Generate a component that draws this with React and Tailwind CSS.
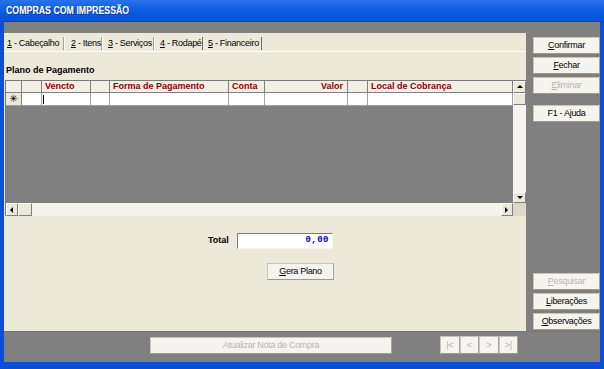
import React from "react";

const FONT = "font-['Liberation_Sans',Arial,sans-serif]";

function Btn({ children, disabled, className = "" }) {
  return (
    <div
      className={`flex items-center justify-center border border-[#c9c6b6] border-b-[#9e9b8c] border-r-[#a9a697] bg-[#f5f4ee] text-[9px] tracking-[-0.3px] leading-none whitespace-nowrap ${
        disabled ? "text-[#b9b6a8]" : "text-black"
      } ${className}`}
    >
      {children}
    </div>
  );
}

function U({ children }) {
  return <span className="underline underline-offset-[1px]">{children}</span>;
}

function Arrow({ dir }) {
  const pts = {
    up: "1,5 4,2 7,5",
    down: "1,2 4,5 7,2",
    left: "5,1 2,4 5,7",
    right: "2,1 5,4 2,7",
  }[dir];
  return (
    <svg width="8" height="8" viewBox="0 0 8 8">
      <polygon points={pts} fill="#000" />
    </svg>
  );
}

function SBtn({ dir, className = "" }) {
  return (
    <div
      className={`flex items-center justify-center bg-[#ece9d8] border border-t-white border-l-white border-b-[#808080] border-r-[#808080] ${className}`}
    >
      <Arrow dir={dir} />
    </div>
  );
}

const cols = [
  { w: "w-[16px]", label: "" },
  { w: "w-[20px]", label: "" },
  { w: "w-[49px]", label: "Vencto" },
  { w: "w-[19px]", label: "" },
  { w: "w-[119px]", label: "Forma de Pagamento" },
  { w: "w-[36px]", label: "Conta" },
  { w: "w-[83px]", label: "Valor", right: true },
  { w: "w-[20px]", label: "" },
  { w: "w-[145px]", label: "Local de Cobrança" },
];

export default function App() {
  return (
    <div className={`w-[604px] h-[369px] flex flex-col bg-[#0c4fd6] ${FONT} overflow-hidden`}>
      {/* Title bar */}
      <div className="h-[22px] flex items-center pl-[6px] bg-gradient-to-b from-[#2a72ec] via-[#0a5be4] to-[#0752d8] border-b border-[#0846c4]">
        <span className="inline-block origin-left scale-x-80 text-white font-bold text-[11px] whitespace-nowrap [text-shadow:1px_1px_0_#0a3a9a]">
          COMPRAS COM IMPRESSÃO
        </span>
      </div>

      {/* Body */}
      <div className="flex-1 flex flex-col mx-[4px] mb-[7px] bg-[#808080]">
        <div className="flex flex-1">
          {/* Left panel */}
          <div className="w-[522px] mt-[11px] bg-[#ece9d8] flex flex-col">
            {/* Tab strip */}
            <div className="h-[19px] pt-[4px] pb-[1px] border-b border-white flex text-[9px] tracking-[-0.3px] text-black whitespace-nowrap">
              <div className="w-[60px] h-[13px] pl-[3px] flex items-center border-r border-[#a7a494]">
                <U>1</U>&nbsp;- Cabeçalho
              </div>
              <div className="w-[38px] h-[13px] pl-[6px] flex items-center border-l border-white border-r border-r-[#a7a494]">
                <U>2</U>&nbsp;- Itens
              </div>
              <div className="w-[52px] h-[13px] pl-[5px] flex items-center border-l border-white border-r border-r-[#a7a494]">
                <U>3</U>&nbsp;- Serviços
              </div>
              <div className="w-[49px] h-[13px] pl-[5px] flex items-center border-l border-white border-r border-r-[#6f6d64]">
                <U>4</U>&nbsp;- Rodapé
              </div>
              <div className="w-[59px] h-[13px] pl-[5px] flex items-center border-r border-[#6f6d64]">
                <U>5</U>&nbsp;- Financeiro
              </div>
            </div>

            <div className="mt-[12px] h-[12px] leading-[12px] pl-[2px] text-[9px] font-bold text-black">
              Plano de Pagamento
            </div>

            {/* Grid */}
            <div className="mt-[4px] ml-[1px] w-[521px] flex flex-col border-t border-l border-[#7a7a7a]">
              <div className="flex h-[122px]">
                <div className="w-[507px] flex flex-col">
                  {/* header */}
                  <div className="flex h-[12px] bg-[#f1efe6] border-b border-[#808080]">
                    {cols.map((c, i) => (
                      <div
                        key={i}
                        className={`${c.w} h-full border-r border-[#808080] text-[9px] font-bold text-[#8b0000] leading-[11px] ${
                          c.right ? "text-right pr-[4px]" : "pl-[3px]"
                        } whitespace-nowrap overflow-hidden`}
                      >
                        {c.label}
                      </div>
                    ))}
                  </div>
                  {/* row */}
                  <div className="flex h-[13px] bg-white border-b border-[#a0a0a0]">
                    {cols.map((c, i) => (
                      <div
                        key={i}
                        className={`${c.w} h-full border-r ${i === 0 ? "border-[#808080] bg-[#ece9d8] flex items-center justify-center" : "border-[#a0a0a0]"} relative`}
                      >
                        {i === 0 && (
                          <span className="text-[10px] leading-none font-['DejaVu_Sans',sans-serif] text-black">✳</span>
                        )}
                        {i === 2 && <div className="ml-[1px] mt-[2px] w-[1px] h-[9px] bg-black" />}
                      </div>
                    ))}
                  </div>
                  <div className="flex-1 bg-[#808080]" />
                </div>
                {/* vertical scrollbar */}
                <div className="w-[13px] flex flex-col bg-[#f4f3ee]">
                  <SBtn dir="up" className="h-[12px]" />
                  <div className="h-[12px] bg-[#ece9d8] border border-t-white border-l-white border-b-[#808080] border-r-[#808080]" />
                  <div className="flex-1" />
                  <SBtn dir="down" className="h-[11px]" />
                </div>
              </div>
              {/* horizontal scrollbar */}
              <div className="flex h-[13px] bg-[#f4f3ee]">
                <SBtn dir="left" className="w-[12px]" />
                <div className="w-[14px] bg-[#ece9d8] border border-t-white border-l-white border-b-[#808080] border-r-[#808080]" />
                <div className="flex-1" />
                <SBtn dir="right" className="w-[12px]" />
                <div className="w-[13px] bg-[#dcd9cc]" />
              </div>
            </div>

            {/* Total */}
            <div className="mt-[17px] flex items-start pl-[204px]">
              <span className="mt-[1px] text-[9px] font-bold text-black w-[29px]">Total</span>
              <div className="w-[96px] h-[16px] bg-white border border-t-[#7a7a7a] border-l-[#7a7a7a] border-b-[#f4f4f0] border-r-[#f4f4f0] flex items-center justify-end pr-[3px]">
                <span className="text-[9px] font-bold text-[#0000c8] font-['Liberation_Mono',monospace] tracking-[0.5px]">
                  0,00
                </span>
              </div>
            </div>

            {/* Gera Plano */}
            <div className="mt-[14px] pl-[263px]">
              <Btn className="w-[67px] h-[17px]">
                <U>G</U>era Plano
              </Btn>
            </div>
          </div>

          {/* Right panel */}
          <div className="flex-1 flex flex-col pl-[7px] pt-[15px] pb-[1px]">
            <div className="flex flex-col gap-[3px]">
              <Btn className="h-[17px]">
                <U>C</U>onfirmar
              </Btn>
              <Btn className="h-[17px]">
                <U>F</U>echar
              </Btn>
              <Btn className="h-[17px]" disabled>
                <U>E</U>liminar
              </Btn>
            </div>
            <Btn className="h-[17px] mt-[11px]">F1 - Ajuda</Btn>
            <div className="flex-1" />
            <div className="flex flex-col gap-[3px]">
              <Btn className="h-[17px]" disabled>
                <U>P</U>esquisar
              </Btn>
              <Btn className="h-[17px]">
                <U>L</U>iberações
              </Btn>
              <Btn className="h-[17px]">
                <U>O</U>bservações
              </Btn>
            </div>
          </div>
        </div>

        {/* Bottom strip */}
        <div className="h-[31px] flex items-start border-t border-[#76756f]">
          <Btn disabled className="ml-[146px] mt-[5px] w-[242px] h-[17px]">
            Atualizar Nota de Compra
          </Btn>
          <div className="ml-[48px] mt-[4px] grid grid-cols-4 w-[78px] h-[18px]">
            {["|<", "<", ">", ">|"].map((t, i) => (
              <Btn key={i} disabled className="h-[18px] text-[8px]">
                {t}
              </Btn>
            ))}
          </div>
        </div>
      </div>
    </div>
  );
}
